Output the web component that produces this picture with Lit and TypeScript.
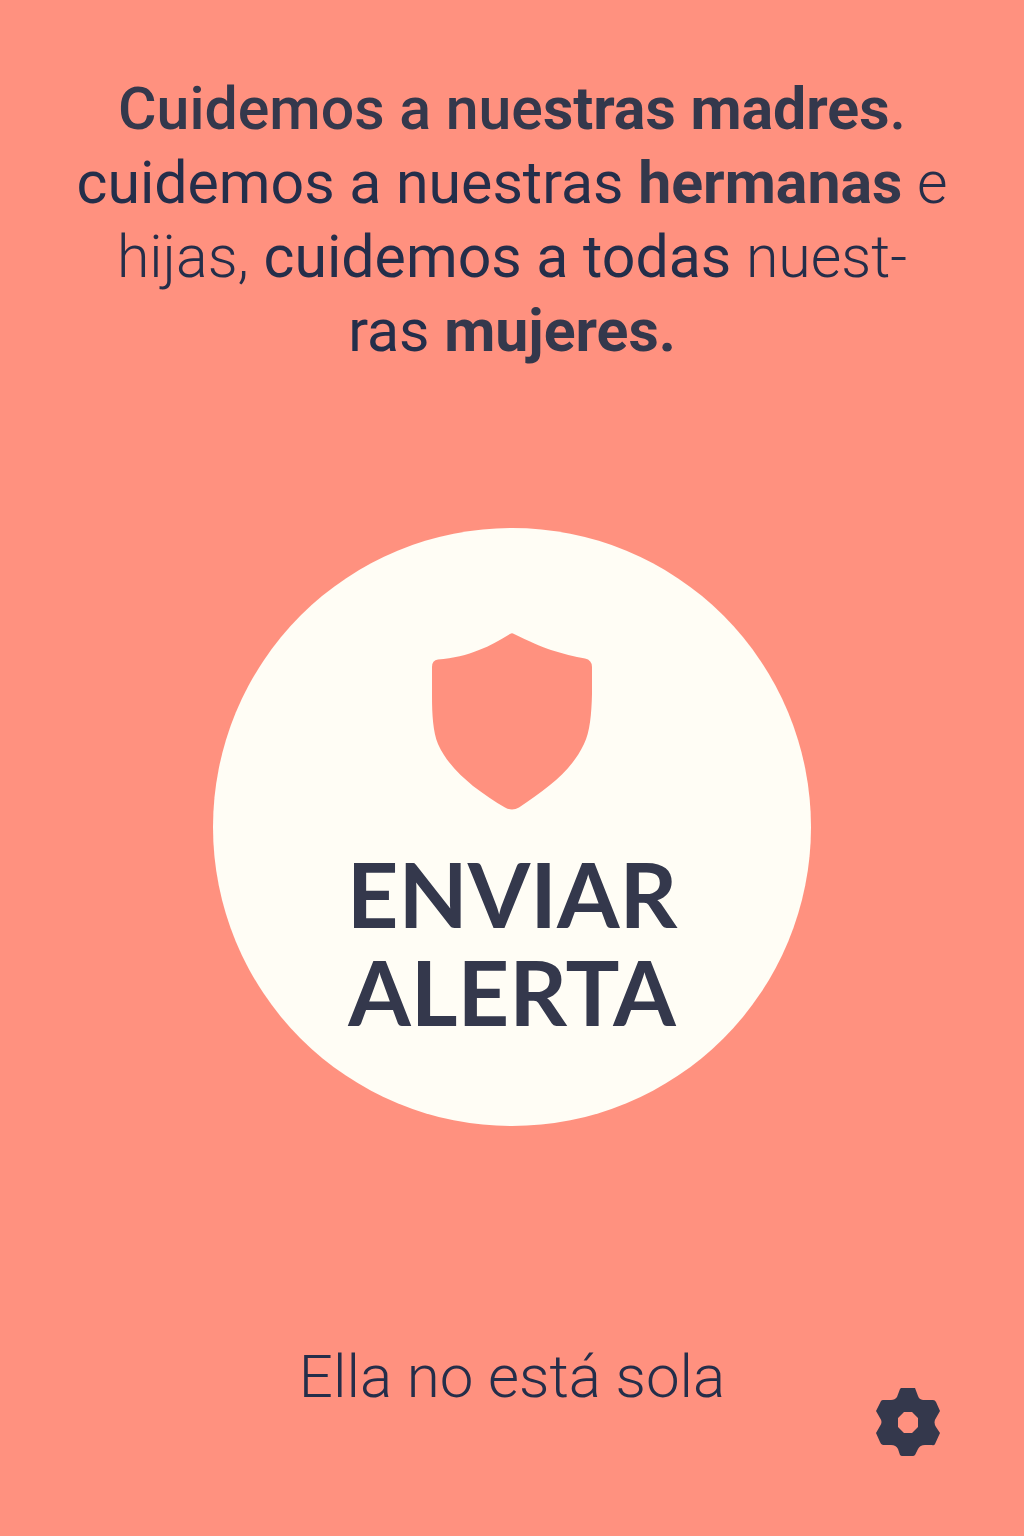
import { LitElement, html, css } from "lit";
import { customElement } from "lit/decorators.js";

@customElement("app-root")
export class AppRoot extends LitElement {
  static styles = css`
    :host {
      display: block;
      --coral: #ff917f;
      --cream: #fffdf5;
      --ink: #34384c;
      --ink-deep: #242e4a;
      background: var(--coral);
      color: var(--ink);
      font-family: Roboto, "Liberation Sans", sans-serif;
    }
    .screen {
      box-sizing: border-box;
      min-height: 100vh;
      display: flex;
      flex-direction: column;
      align-items: center;
      padding: 72px 16px 80px;
    }
    .message {
      margin: 0 0 160px;
      text-align: center;
      font-size: clamp(16px, 6vw, 59px);
      line-height: 74px;
      font-weight: 400;
      color: var(--ink-deep);
    }
    .light {
      font-weight: 300;
    }
    .medium {
      font-weight: 500;
      color: var(--ink);
    }
    .bold {
      font-weight: 700;
      color: var(--ink);
    }
    .alert {
      box-sizing: border-box;
      width: min(598px, 90vw);
      aspect-ratio: 1;
      border: 0;
      border-radius: 50%;
      padding: 18px 0 0;
      background: var(--cream);
      color: var(--ink);
      display: flex;
      flex-direction: column;
      align-items: center;
      justify-content: center;
      gap: 32px;
      font-family: Lato, "Open Sans", sans-serif;
      font-size: clamp(40px, 9vw, 90px);
      line-height: 98px;
      font-weight: 700;
      cursor: pointer;
    }
    .shield {
      width: 162px;
      height: 180px;
      fill: var(--coral);
    }
    .label {
      display: block;
    }
    .footer {
      align-self: stretch;
      display: grid;
      grid-template-columns: 1fr auto 1fr;
      margin-top: auto;
      padding: 0 68px;
    }
    .motto {
      grid-column: 2;
      margin: 0 0 42px;
      font-size: clamp(16px, 6vw, 60px);
      line-height: 74px;
      font-weight: 300;
      color: var(--ink-deep);
    }
    .settings {
      justify-self: end;
      align-self: end;
      border: 0;
      padding: 0;
      background: none;
      color: var(--ink);
      cursor: pointer;
    }
    .gear {
      display: block;
      width: 64px;
      height: 68px;
      fill: currentColor;
    }
  `;

  render() {
    return html`
      <main class="screen">
        <p class="message">
          <span class="medium">Cuidemos a nue</span><span class="bold">stras madres</span><span class="medium">.</span><br />
          cuidemos a nuestras <span class="bold">hermanas</span> <span class="light">e</span><br />
          <span class="light">hijas,</span> cuidemos a todas <span class="light">nuest-</span><br />
          ras <span class="bold">mujeres.</span>
        </p>
        <button class="alert" type="button">
          <svg class="shield" viewBox="0 0 162 180" aria-hidden="true">
            <path
              d="M79 2Q81 .5 83 2C97 9 111 15 120 18C131 21.500 144 25 154 26.500Q161 28 161 35V62C160.500 82 159 100 153 112C145 129 132 143 119 153C109 161 98 169 88 175.500Q81 179.500 74 175.500C64 170 53 162 42 154C29 143 15 130 7 112C2 100 1 82 1 64V35Q1 28 7 27.500C22 26.500 36 23 48 18C59 14 69 8 79 2Z"
            />
          </svg>
          <span class="label">ENVIAR<br />ALERTA</span>
        </button>
        <footer class="footer">
          <p class="motto">Ella no está sola</p>
          <button class="settings" type="button" aria-label="Ajustes">
            <svg class="gear" viewBox="0 0 64 68" aria-hidden="true">
              <path
                fill-rule="evenodd"
                d="M25 0Q32 -.5 39 0L42 8Q43 11.500 47 12H57Q59 12 60 14L64 23L60 30Q57 34 60 39L64 45L59 56Q58 58 56 57H49Q44 57 42 61L39 67Q38 68 37 68H26Q25 68 24 67L22 61Q20 57 15 57H7Q5 57 4 54L0 45L4 38Q7 34 4 30L0 23L5 13Q6 11.500 8 12H15Q19 12 21 9L24 1ZM28 24L22 30V39L28 45H36L42 39V30L36 24Z"
              />
            </svg>
          </button>
        </footer>
      </main>
    `;
  }
}
